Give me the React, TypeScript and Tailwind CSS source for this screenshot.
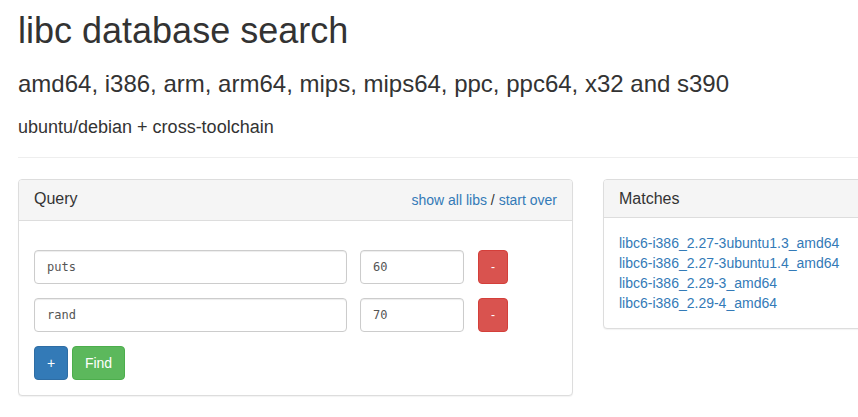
import React from "react";

const inputCls =
  "h-[34px] rounded-[4px] border border-[#ccc] bg-white px-[12px] text-[12px] text-[#555] shadow-[inset_0_1px_1px_rgba(0,0,0,0.075)] outline-none font-['DejaVu_Sans_Mono',monospace]";

function Row({ name, offset }: { name: string; offset: string }) {
  return (
    <div className="flex items-start">
      <input className={inputCls + " w-[313px]"} defaultValue={name} readOnly />
      <input className={inputCls + " ml-[13px] w-[104px]"} defaultValue={offset} readOnly />
      <button className="ml-[14px] h-[34px] w-[30px] rounded-[4px] border border-[#d43f3a] bg-[#d9534f] text-[12px] leading-none text-white">
        -
      </button>
    </div>
  );
}

export default function App() {
  const matches = [
    "libc6-i386_2.27-3ubuntu1.3_amd64",
    "libc6-i386_2.27-3ubuntu1.4_amd64",
    "libc6-i386_2.29-3_amd64",
    "libc6-i386_2.29-4_amd64",
  ];
  return (
    <div className="h-[417px] w-[858px] overflow-hidden bg-white font-['Liberation_Sans',Arial,sans-serif] text-[14px] leading-[20px] text-[#333]">
      <div className="flow-root pl-[18px]">
        <h1 className="mt-[11px] text-[36px] font-normal leading-[1.1]">libc database search</h1>
        <h3 className="mt-[20px] text-[24px] font-normal leading-[1.1]">
          amd64, i386, arm, arm64, mips, mips64, ppc, ppc64, x32 and s390
        </h3>
        <h4 className="mt-[21px] text-[18px] font-normal leading-[1.1]">ubuntu/debian + cross-toolchain</h4>
        <hr className="mt-[19px] border-0 border-t border-[#eee]" />
        <div className="mt-[21px] flex items-start gap-[30px]">
          <div className="w-[555px] shrink-0 rounded-[4px] border border-[#ddd] bg-white shadow-[0_1px_1px_rgba(0,0,0,0.05)]">
            <div className="flex items-start justify-between rounded-t-[3px] border-b border-[#ddd] bg-[#f5f5f5] px-[15px] py-[10px]">
              <div className="text-[16px] leading-[1.1]">Query</div>
              <div className="text-[14px] leading-[20px]">
                <a className="text-[#337ab7]">show all libs</a> / <a className="text-[#337ab7]">start over</a>
              </div>
            </div>
            <div className="px-[15px] pb-[15px] pt-[29px]">
              <Row name="puts" offset="60" />
              <div className="mt-[14px]">
                <Row name="rand" offset="70" />
              </div>
              <div className="mt-[14px] flex items-start gap-[4px]">
                <button className="h-[34px] w-[34px] rounded-[4px] border border-[#2e6da4] bg-[#337ab7] text-[14px] text-white">
                  +
                </button>
                <button className="h-[34px] w-[53px] rounded-[4px] border border-[#4cae4c] bg-[#5cb85c] text-[14px] text-white">
                  Find
                </button>
              </div>
            </div>
          </div>
          <div className="w-[263px] shrink-0 rounded-[4px] border border-[#ddd] bg-white shadow-[0_1px_1px_rgba(0,0,0,0.05)]">
            <div className="rounded-t-[3px] border-b border-[#ddd] bg-[#f5f5f5] px-[15px] py-[10px]">
              <div className="text-[16px] leading-[1.1]">Matches</div>
            </div>
            <div className="p-[15px]">
              {matches.map((m) => (
                <a key={m} className="block text-[14px] leading-[20px] text-[#337ab7]">
                  {m}
                </a>
              ))}
            </div>
          </div>
        </div>
      </div>
    </div>
  );
}
